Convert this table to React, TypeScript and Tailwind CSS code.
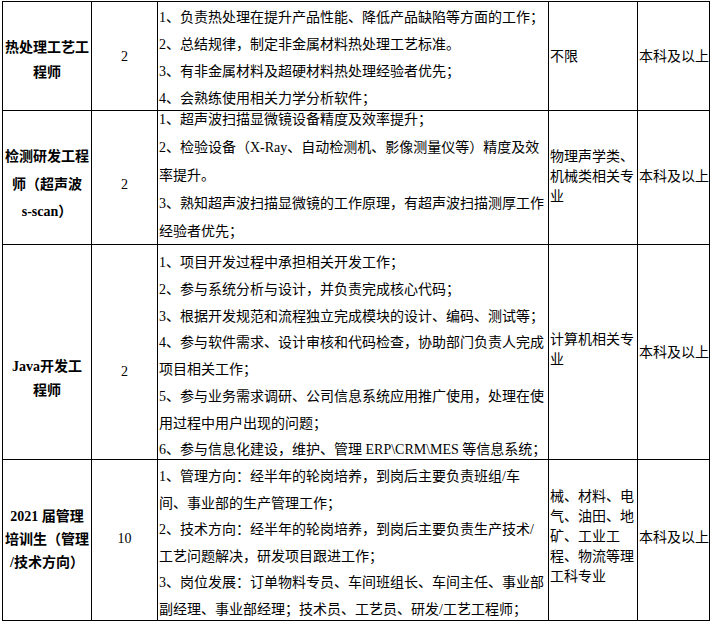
import React from "react";

type Row = {
  h: string;
  title: { lines: string[]; cls: string };
  num: { text: string; cls: string };
  duty: { lines: string[]; cls: string };
  major: { lines: string[]; cls: string };
  edu: { cls: string };
};

const rows: Row[] = [
  {
    h: "h-[108px]",
    title: { lines: ["热处理工艺工", "程师"], cls: "pt-[33px] leading-[25px]" },
    num: { text: "2", cls: "pt-[45px]" },
    duty: {
      lines: [
        "1、负责热处理在提升产品性能、降低产品缺陷等方面的工作；",
        "2、总结规律，制定非金属材料热处理工艺标准。",
        "3、有非金属材料及超硬材料热处理经验者优先；",
        "4、会熟练使用相关力学分析软件；",
      ],
      cls: "pt-[2px] leading-[27px]",
    },
    major: { lines: ["不限"], cls: "pt-[45px]" },
    edu: { cls: "pt-[45px]" },
  },
  {
    h: "h-[133px]",
    title: {
      lines: ["检测研发工程", "师（超声波", "s-scan）"],
      cls: "pt-[32px] leading-[27.5px]",
    },
    num: { text: "2", cls: "pt-[64px]" },
    duty: {
      lines: [
        "1、超声波扫描显微镜设备精度及效率提升；",
        "2、检验设备（X-Ray、自动检测机、影像测量仪等）精度及效",
        "率提升。",
        "3、熟知超声波扫描显微镜的工作原理，有超声波扫描测厚工作",
        "经验者优先；",
      ],
      cls: "-mt-[5px] leading-[28px]",
    },
    major: {
      lines: ["物理声学类、", "机械类相关专", "业"],
      cls: "pt-[36px] leading-[19.5px]",
    },
    edu: { cls: "pt-[56px]" },
  },
  {
    h: "h-[214px]",
    title: { lines: ["Java开发工", "程师"], cls: "pt-[110px] leading-[24px]" },
    num: { text: "2", cls: "pt-[117px]" },
    duty: {
      lines: [
        "1、项目开发过程中承担相关开发工作；",
        "2、参与系统分析与设计，并负责完成核心代码；",
        "3、根据开发规范和流程独立完成模块的设计、编码、测试等；",
        "4、参与软件需求、设计审核和代码检查，协助部门负责人完成",
        "项目相关工作；",
        "5、参与业务需求调研、公司信息系统应用推广使用，处理在使",
        "用过程中用户出现的问题；",
        "6、参与信息化建设，维护、管理 ERP\\CRM\\MES 等信息系统；",
      ],
      cls: "pt-[5px] leading-[26.75px]",
    },
    major: {
      lines: ["计算机相关专", "业"],
      cls: "pt-[85px] leading-[20px]",
    },
    edu: { cls: "pt-[98px]" },
  },
  {
    h: "h-[160px]",
    title: {
      lines: ["2021 届管理", "培训生（管理", "/技术方向）"],
      cls: "pt-[45px] leading-[23px]",
    },
    num: { text: "10", cls: "pt-[69px]" },
    duty: {
      lines: [
        "1、管理方向：经半年的轮岗培养，到岗后主要负责班组/车",
        "间、事业部的生产管理工作；",
        "2、技术方向：经半年的轮岗培养，到岗后主要负责生产技术/",
        "工艺问题解决，研发项目跟进工作；",
        "3、岗位发展：订单物料专员、车间班组长、车间主任、事业部",
        "副经理、事业部经理；技术员、工艺员、研发/工艺工程师；",
      ],
      cls: "pt-[4px] leading-[26.6px]",
    },
    major: {
      lines: ["械、材料、电", "气、油田、地", "矿、工业工", "程、物流等理", "工科专业"],
      cls: "pt-[27px] leading-[20.75px]",
    },
    edu: { cls: "pt-[68px]" },
  },
];

const font = "font-['Liberation_Serif','Noto_Sans_CJK_SC',serif]";

export default function App() {
  return (
    <div className="w-[713px] h-[623px] bg-white overflow-hidden text-black">
      <div className="ml-[2px] mt-[1px] w-[708px] grid grid-cols-[88px_65px_390px_88px_71px] gap-px bg-black p-px">
        {rows.map((r, i) => (
          <React.Fragment key={i}>
            <div className={`bg-white ${r.h} overflow-visible`}>
              <div
                className={`${r.title.cls} ${font} text-[14px] font-bold text-center whitespace-nowrap`}
              >
                {r.title.lines.map((l, j) => (
                  <div key={j}>{l}</div>
                ))}
              </div>
            </div>
            <div className={`bg-white ${r.h}`}>
              <div
                className={`${r.num.cls} ${font} text-[14px] leading-[20px] text-center`}
              >
                {r.num.text}
              </div>
            </div>
            <div className={`bg-white ${r.h} pl-px`}>
              <div className={`${r.duty.cls} ${font} text-[14px] whitespace-nowrap`}>
                {r.duty.lines.map((l, j) => (
                  <div key={j}>{l}</div>
                ))}
              </div>
            </div>
            <div className={`bg-white ${r.h} pl-px`}>
              <div
                className={`${r.major.cls} ${font} text-[14px] leading-[20px] whitespace-nowrap`}
              >
                {r.major.lines.map((l, j) => (
                  <div key={j}>{l}</div>
                ))}
              </div>
            </div>
            <div className={`bg-white ${r.h} pl-px`}>
              <div
                className={`${r.edu.cls} ${font} text-[14px] leading-[20px] whitespace-nowrap`}
              >
                本科及以上
              </div>
            </div>
          </React.Fragment>
        ))}
      </div>
    </div>
  );
}
